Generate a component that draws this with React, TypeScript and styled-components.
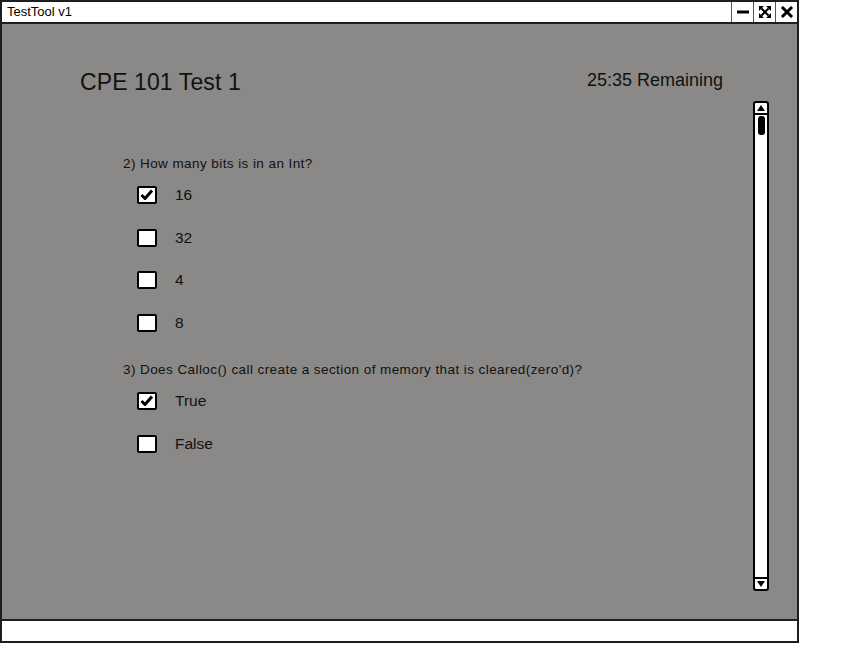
import React from 'react';
import styled, { createGlobalStyle } from 'styled-components';

const GlobalStyle = createGlobalStyle`
  html, body {
    margin: 0;
    padding: 0;
    background: #ffffff;
  }
  body {
    font-family: "Liberation Sans", Arial, sans-serif;
    color: #151515;
  }
`;

type Option = { label: string; checked?: boolean };
type Question = { text: string; options: Option[] };

const questions: Question[] = [
  {
    text: '2) How many bits is in an Int?',
    options: [{ label: '16', checked: true }, { label: '32' }, { label: '4' }, { label: '8' }],
  },
  {
    text: "3) Does Calloc() call create a section of memory that is cleared(zero'd)?",
    options: [{ label: 'True', checked: true }, { label: 'False' }],
  },
];

const MinimizeIcon = () => (
  <svg width="14" height="14" viewBox="0 0 14 14">
    <rect x="1" y="5.5" width="12" height="3" fill="#000" />
  </svg>
);

const MaximizeIcon = () => (
  <svg width="14" height="14" viewBox="0 0 14 14">
    <path d="M3.5 3.5 L10.5 10.5 M10.5 3.5 L3.5 10.5" stroke="#000" strokeWidth="2" />
    <path d="M1 1 L6 1 L1 6 Z M13 1 L8 1 L13 6 Z M1 13 L6 13 L1 8 Z M13 13 L8 13 L13 8 Z" fill="#000" />
  </svg>
);

const CloseIcon = () => (
  <svg width="14" height="14" viewBox="0 0 14 14">
    <path d="M3 3 L11 11 M11 3 L3 11" stroke="#000" strokeWidth="3" strokeLinecap="square" />
  </svg>
);

const CheckMark = () => (
  <svg width="16" height="14" viewBox="0 0 16 14">
    <path d="M2.5 7 L6 10.5 L13 2.5" stroke="#000" strokeWidth="3" fill="none" strokeLinejoin="round" />
  </svg>
);

const ArrowUp = () => (
  <svg width="8" height="6" viewBox="0 0 8 6">
    <path d="M0 6 L4 0 L8 6 Z" fill="#000" />
  </svg>
);

const ArrowDown = () => (
  <svg width="8" height="6" viewBox="0 0 8 6">
    <path d="M0 0 L4 6 L8 0 Z" fill="#000" />
  </svg>
);

const App: React.FC = () => {
  return (
    <>
      <GlobalStyle />
      <Window>
        <TitleBar>
          <TitleText>TestTool v1</TitleText>
          <WindowButton>
            <MinimizeIcon />
          </WindowButton>
          <WindowButton>
            <MaximizeIcon />
          </WindowButton>
          <WindowButton>
            <CloseIcon />
          </WindowButton>
        </TitleBar>
        <Main>
          <Header>
            <TestTitle>CPE 101 Test 1</TestTitle>
            <Timer>25:35 Remaining</Timer>
          </Header>
          <Body>
            <Questions>
              {questions.map((q) => (
                <QuestionBlock key={q.text}>
                  <QuestionText>{q.text}</QuestionText>
                  {q.options.map((o) => (
                    <OptionRow key={o.label}>
                      <CheckBox>{o.checked && <CheckMark />}</CheckBox>
                      <OptionLabel>{o.label}</OptionLabel>
                    </OptionRow>
                  ))}
                </QuestionBlock>
              ))}
            </Questions>
            <ScrollBar>
              <ScrollButton $top>
                <ArrowUp />
              </ScrollButton>
              <ScrollTrack>
                <ScrollThumb />
              </ScrollTrack>
              <ScrollButton>
                <ArrowDown />
              </ScrollButton>
            </ScrollBar>
          </Body>
        </Main>
        <StatusBar />
      </Window>
    </>
  );
};

const Window = styled.div`
  width: 799px;
  height: 643px;
  box-sizing: border-box;
  border: 2px solid #1e1e1e;
  display: flex;
  flex-direction: column;
  background: #ffffff;
`;

const TitleBar = styled.div`
  height: 20px;
  flex: none;
  display: flex;
  align-items: stretch;
  background: #ffffff;
  border-bottom: 2px solid #1e1e1e;
`;

const TitleText = styled.div`
  flex: 1;
  padding-left: 5px;
  font-family: "Liberation Sans", Arial, sans-serif;
  font-size: 13px;
  line-height: 20px;
  color: #000;
`;

const WindowButton = styled.div`
  width: 21px;
  display: flex;
  align-items: center;
  justify-content: center;
  border-left: 1px solid #555;
  background: #ffffff;
`;

const Main = styled.div`
  flex: 1;
  display: flex;
  flex-direction: column;
  background: #8a8988;
  border-bottom: 2px solid #1e1e1e;
`;

const Header = styled.div`
  height: 77px;
  box-sizing: border-box;
  flex: none;
  display: flex;
  justify-content: space-between;
  align-items: flex-start;
  padding: 47px 74px 0 78px;
`;

const TestTitle = styled.div`
  font-size: 23px;
  line-height: 23px;
  letter-spacing: 0.1px;
  color: #111;
`;

const Timer = styled.div`
  font-size: 18px;
  line-height: 23px;
  margin-top: -2px;
  color: #111;
`;

const Body = styled.div`
  flex: 1;
  display: flex;
  align-items: stretch;
`;

const Questions = styled.div`
  flex: 1;
  display: flex;
  flex-direction: column;
  gap: 16px;
  padding: 53px 0 0 121px;
`;

const QuestionBlock = styled.div`
  display: flex;
  flex-direction: column;
`;

const QuestionText = styled.div`
  font-size: 13.5px;
  line-height: 20px;
  letter-spacing: 0.42px;
  color: #111;
`;

const OptionRow = styled.div`
  height: 42.5px;
  display: flex;
  align-items: center;
  padding-left: 14px;
  gap: 18px;
`;

const CheckBox = styled.div`
  width: 20px;
  height: 18px;
  box-sizing: border-box;
  border: 2.5px solid #000;
  border-radius: 2px;
  background: #ffffff;
  display: flex;
  align-items: center;
  justify-content: center;
  flex: none;
`;

const OptionLabel = styled.div`
  font-size: 15.5px;
  line-height: 20px;
  color: #111;
`;

const ScrollBar = styled.div`
  width: 16px;
  box-sizing: border-box;
  margin: 0 28px 28px 0;
  border: 2px solid #000;
  border-radius: 3px;
  background: #ffffff;
  display: flex;
  flex-direction: column;
`;

const ScrollButton = styled.div<{ $top?: boolean }>`
  height: 10px;
  flex: none;
  display: flex;
  align-items: center;
  justify-content: center;
  border-bottom: ${(p) => (p.$top ? '2px solid #000' : 'none')};
  border-top: ${(p) => (p.$top ? 'none' : '2px solid #000')};
`;

const ScrollTrack = styled.div`
  flex: 1;
  display: flex;
  justify-content: center;
  padding-top: 1px;
`;

const ScrollThumb = styled.div`
  width: 7px;
  height: 19px;
  border-radius: 3px;
  background: #000;
`;

const StatusBar = styled.div`
  height: 20px;
  flex: none;
  background: #ffffff;
`;

export default App;
